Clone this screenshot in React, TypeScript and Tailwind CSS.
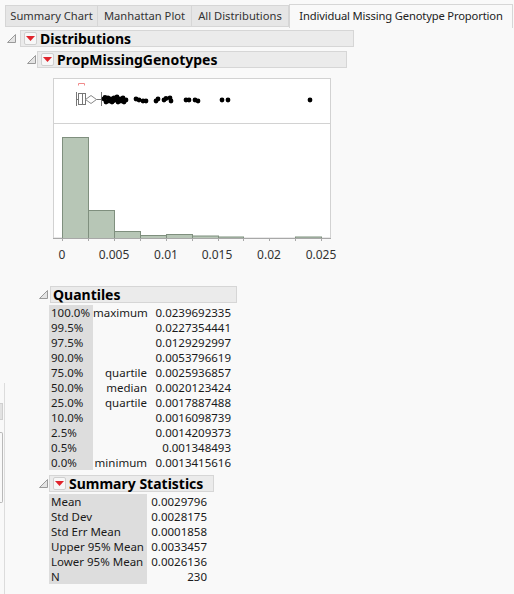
import React from "react";

const FONT = { fontFamily: '"Noto Sans", "Open Sans", sans-serif' };

function Disclosure() {
  return (
    <svg width="9" height="9" viewBox="0 0 9 9" className="shrink-0">
      <polygon points="8.5,0.5 8.5,8.5 0.5,8.5" fill="#e4e4e4" stroke="#9a9a9a" strokeWidth="1" />
    </svg>
  );
}

function RedButton() {
  return (
    <div className="w-[13px] h-[13px] shrink-0 rounded-[2px] border border-[#cfcfcf] bg-[#f7f7f7] flex items-center justify-center">
      <svg width="9" height="5" viewBox="0 0 9 5">
        <polygon points="0,0 9,0 4.5,5" fill="#e0242c" />
      </svg>
    </div>
  );
}

const points: [number, number][] = [
  [104, 99], [106, 102], [108, 98], [109, 101], [111, 99], [112, 102], [114, 98], [116, 100],
  [117, 97], [118, 102], [120, 99], [121, 101], [123, 98], [124, 102], [126, 100], [113, 101],
  [105, 97.5], [119, 100.5],
  [136, 99], [139, 100], [143, 101], [146, 101],
  [156, 101], [158, 99], [164, 100], [166, 98.5], [171, 101], [170, 98],
  [186, 100], [189, 100], [195, 100], [198, 101],
  [222, 100], [228, 100],
  [310, 100],
];

function Chart() {
  const axisY = 238;
  const bars: [number, number, number][] = [
    [62, 88, 137],
    [88, 114, 210],
    [114, 140, 231],
    [140, 166, 235],
    [166, 192, 234],
    [192, 218, 235.5],
    [218, 243, 236.5],
    [295, 321, 236.5],
  ];
  const ticks = [62, 88, 114, 140, 166, 192, 218, 243, 269, 295, 321];
  const labels: [number, string][] = [
    [62, "0"],
    [114, "0.005"],
    [166, "0.01"],
    [217, "0.015"],
    [269, "0.02"],
    [321, "0.025"],
  ];
  const ox = 50;
  const oy = 75;
  return (
    <svg width="290" height="190" viewBox={`${ox} ${oy} 290 190`} className="block">
      <rect x="53.5" y="78.5" width="277" height="45" fill="#ffffff" stroke="#d2d2d2" />
      <rect x="53.5" y="123.5" width="277" height={axisY - 123.5} fill="#ffffff" stroke="#d2d2d2" />
      {bars.map(([a, b, t], i) => (
        <rect key={i} x={a + 0.5} y={t + 0.5} width={b - a} height={axisY - t} fill="#b7c6b6" stroke="#7f8f7e" strokeWidth="1" />
      ))}
      <line x1="53" y1={axisY + 0.5} x2="331" y2={axisY + 0.5} stroke="#a8a8a8" />
      {ticks.map((t) => (
        <line key={t} x1={t + 0.5} y1={axisY} x2={t + 0.5} y2={axisY + 3} stroke="#a8a8a8" />
      ))}
      {labels.map(([x, s]) => (
        <text key={s} x={x} y={259} textAnchor="middle" fontSize="12" fill="#333" style={FONT}>
          {s}
        </text>
      ))}
      {/* box plot */}
      <path d="M78.5 85.5 V83.5 H84.5 V85.5" fill="none" stroke="#f08a8a" strokeWidth="1" />
      <line x1="76.5" y1="92" x2="76.5" y2="106" stroke="#777" />
      <line x1="76.5" y1="99.5" x2="78.5" y2="99.5" stroke="#777" />
      <rect x="78.5" y="93.5" width="7" height="11" fill="#fff" stroke="#777" />
      <line x1="82.5" y1="93.5" x2="82.5" y2="104.5" stroke="#777" />
      <polygon points="85.5,99.5 91,95.5 96.5,99.5 91,103.5" fill="#fff" stroke="#888" />
      <line x1="96.5" y1="99.5" x2="101.5" y2="99.5" stroke="#777" />
      <line x1="101.5" y1="92" x2="101.5" y2="106" stroke="#777" />
      {points.map(([x, y], i) => (
        <circle key={i} cx={x} cy={y} r="2.4" fill="#000" />
      ))}
    </svg>
  );
}

const quantiles: [string, string, string][] = [
  ["100.0%", "maximum", "0.0239692335"],
  ["99.5%", "", "0.0227354441"],
  ["97.5%", "", "0.0129292997"],
  ["90.0%", "", "0.0053796619"],
  ["75.0%", "quartile", "0.0025936857"],
  ["50.0%", "median", "0.0020123424"],
  ["25.0%", "quartile", "0.0017887488"],
  ["10.0%", "", "0.0016098739"],
  ["2.5%", "", "0.0014209373"],
  ["0.5%", "", "0.001348493"],
  ["0.0%", "minimum", "0.0013415616"],
];

const stats: [string, string][] = [
  ["Mean", "0.0029796"],
  ["Std Dev", "0.0028175"],
  ["Std Err Mean", "0.0001858"],
  ["Upper 95% Mean", "0.0033457"],
  ["Lower 95% Mean", "0.0026136"],
  ["N", "230"],
];

export default function App() {
  return (
    <div className="relative w-[514px] h-[594px] overflow-hidden bg-[#f9f9f9] text-[#1a1a1a]" style={FONT}>
      <div className="absolute left-[4px] top-[383px] bottom-0 w-px bg-[#dcdcdc]" />
      <div className="absolute left-0 top-[403px] w-[3px] h-[17px] bg-[#e2e2e2] border-y border-r border-[#cfcfcf]" />
      <div className="absolute left-0 top-[432px] w-[3px] h-[71px] border-y border-r border-[#b9b9b9] rounded-r-[2px]" />

      {/* tabs */}
      <div className="flex items-end pl-[5px] pt-[4px] h-[28px] text-[11.2px] text-[#333] whitespace-nowrap">
        <div className="w-[93px] h-[22px] mb-px flex items-center justify-center bg-[#e6e6e6] border border-[#d6d6d6]">Summary Chart</div>
        <div className="w-[94px] h-[22px] mb-px flex items-center justify-center bg-[#e6e6e6] border border-l-0 border-[#d6d6d6]">Manhattan Plot</div>
        <div className="w-[97px] h-[22px] mb-px flex items-center justify-center bg-[#e6e6e6] border border-l-0 border-[#d6d6d6]">All Distributions</div>
        <div className="w-[224px] h-[24px] flex items-center justify-center bg-[#f9f9f9] border border-b-0 border-[#d6d6d6] text-[#222] tracking-[-0.15px]">Individual Missing Genotype Proportion</div>
      </div>

      {/* Distributions header */}
      <div className="flex items-center pl-[7px] mt-[2px] h-[17px]">
        <Disclosure />
        <div className="ml-[4px] w-[334px] h-[17px] flex items-center gap-[3px] pl-[3px] bg-[#ebebeb] border border-[#d6d6d6]">
          <RedButton />
          <span className="text-[14px] font-bold leading-none text-black">Distributions</span>
        </div>
      </div>

      {/* PropMissingGenotypes header */}
      <div className="flex items-center pl-[27px] mt-[4px] h-[17px]">
        <Disclosure />
        <div className="ml-[1px] w-[310px] h-[17px] flex items-center gap-[3px] pl-[3px] bg-[#ebebeb] border border-[#d6d6d6]">
          <RedButton />
          <span className="text-[14px] font-bold leading-none text-black">PropMissingGenotypes</span>
        </div>
      </div>

      {/* chart */}
      <div className="pl-[50px] mt-[7px]">
        <Chart />
      </div>

      {/* Quantiles */}
      <div className="flex items-center pl-[39px] mt-[21px] h-[17px]">
        <Disclosure />
        <div className="ml-[2px] w-[187px] h-[17px] flex items-center pl-[2px] bg-[#ebebeb] border border-[#d6d6d6]">
          <span className="text-[14px] font-bold leading-none text-black">Quantiles</span>
        </div>
      </div>
      <div className="ml-[49px] mt-[2px] grid grid-cols-[44px_57px_84px] text-[11.5px] leading-[15px]">
        {quantiles.map(([p, n, v], i) => (
          <React.Fragment key={i}>
            <div className="bg-[#dddddd] pl-[2px]">{p}</div>
            <div className="text-right pr-[3px]">{n}</div>
            <div className="text-right pr-[3px]">{v}</div>
          </React.Fragment>
        ))}
      </div>

      {/* Summary Statistics */}
      <div className="flex items-center pl-[39px] mt-[5px] h-[17px]">
        <Disclosure />
        <div className="ml-[1px] w-[165px] h-[17px] flex items-center gap-[3px] pl-[3px] bg-[#ebebeb] border border-[#d6d6d6]">
          <RedButton />
          <span className="text-[14px] font-bold leading-none text-black">Summary Statistics</span>
        </div>
      </div>
      <div className="ml-[49px] mt-[2px] grid grid-cols-[98px_63px] text-[11.5px] leading-[15px]">
        {stats.map(([l, v], i) => (
          <React.Fragment key={i}>
            <div className="bg-[#dddddd] pl-[2px]">{l}</div>
            <div className="text-right pr-[3px]">{v}</div>
          </React.Fragment>
        ))}
      </div>
    </div>
  );
}
